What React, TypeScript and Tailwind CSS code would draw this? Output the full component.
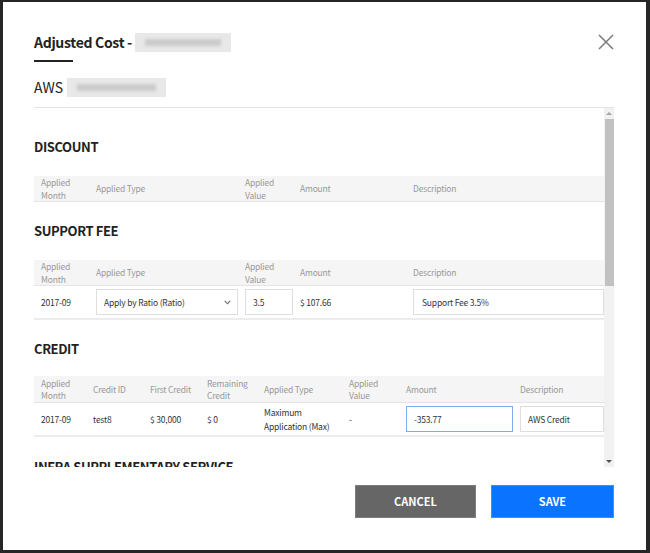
import React from "react";

const Blur = ({ w }: { w: number }) => (
  <span
    className="inline-flex items-center justify-center h-[19px] bg-[#e8e8e8] align-middle blur-[0.6px]"
    style={{ width: w }}
  >
    <span className="block h-[7px] bg-[#cbcbcb] blur-[1.8px]" style={{ width: w - 20 }} />
  </span>
);

const Th = ({ children }: { children: React.ReactNode }) => (
  <div className="pl-[7px] text-[8.5px] tracking-[-0.2px] leading-[12.5px] text-[#999] flex items-center">{children}</div>
);

const Td = ({ children, className = "" }: { children?: React.ReactNode; className?: string }) => (
  <div className={"pl-[7px] text-[8.5px] tracking-[-0.2px] leading-[12px] text-[#333] flex items-center " + className}>{children}</div>
);

const Box = ({ children, className = "" }: { children?: React.ReactNode; className?: string }) => (
  <div className={"h-[26px] w-full border bg-white flex items-center pl-[7px] text-[8.5px] tracking-[-0.2px] text-[#333] " + className}>
    {children}
  </div>
);

const Heading = ({ children, className = "" }: { children: React.ReactNode; className?: string }) => (
  <div className={"text-[13px] tracking-[-0.4px] leading-[18px] font-bold text-[#222] whitespace-nowrap " + className}>{children}</div>
);

export default function App() {
  return (
    <div className="w-[650px] h-[553px] bg-white border-[#262626] border-t-2 border-l-[3px] border-r-[4px] border-b-[3px] pl-[31px] pr-[32px] pt-[30px] flex flex-col font-['Noto_Sans_CJK_KR','Noto_Sans',sans-serif] overflow-hidden">
      {/* Title */}
      <div className="flex items-center justify-between h-[20px]">
        <div className="flex items-center text-[14px] tracking-[-0.3px] font-bold text-[#222] leading-[20px]">
          <span>Adjusted Cost -&nbsp;</span>
          <Blur w={96} />
        </div>
        <svg width="16" height="16" viewBox="0 0 16 16">
          <path d="M1 1 L15 15 M15 1 L1 15" stroke="#7a7a7a" strokeWidth="1.5" fill="none" />
        </svg>
      </div>
      <div className="mt-[8px] h-[2px] w-[39px] bg-[#222]" />
      <div className="mt-[15px] flex items-center text-[14px] leading-[20px] text-[#222]">
        <span className="mr-[4px]">AWS</span>
        <Blur w={99} />
      </div>

      {/* Scroll region */}
      <div className="mt-[10px] border-t border-[#e2e2e2] h-[360px] flex">
        <div className="w-[570px] overflow-hidden">
          <Heading className="mt-[30px]">DISCOUNT</Heading>
          <div className="mt-[20px] grid grid-cols-[55px_149px_55px_113px_198px] h-[26px] bg-[#f5f5f5] border-b border-[#e4e4e4]">
            <Th>Applied<br />Month</Th>
            <Th>Applied Type</Th>
            <Th>Applied<br />Value</Th>
            <Th>Amount</Th>
            <Th>Description</Th>
          </div>

          <Heading className="mt-[20px]">SUPPORT FEE</Heading>
          <div className="mt-[20px] grid grid-cols-[55px_149px_55px_113px_198px] h-[26px] bg-[#f5f5f5] border-b border-[#e4e4e4]">
            <Th>Applied<br />Month</Th>
            <Th>Applied Type</Th>
            <Th>Applied<br />Value</Th>
            <Th>Amount</Th>
            <Th>Description</Th>
          </div>
          <div className="grid grid-cols-[55px_149px_55px_113px_198px] h-[34px] border-b-2 border-[#ececec]">
            <Td>2017-09</Td>
            <Td>
              <Box className="border-[#dedede] justify-between pr-[6px]">
                <span>Apply by Ratio (Ratio)</span>
                <svg width="7" height="5" viewBox="0 0 7 5">
                  <path d="M0.8 0.8 L3.5 3.8 L6.2 0.8" stroke="#666" strokeWidth="1.1" fill="none" />
                </svg>
              </Box>
            </Td>
            <Td>
              <Box className="border-[#dedede]">3.5</Box>
            </Td>
            <Td>$ 107.66</Td>
            <Td>
              <Box className="border-[#dedede] pl-[8px]">Support Fee 3.5%</Box>
            </Td>
          </div>

          <Heading className="mt-[20px]">CREDIT</Heading>
          <div className="mt-[18px] grid grid-cols-[52px_57px_57px_57px_85px_57px_114px_91px] h-[27px] bg-[#f5f5f5] border-b border-[#e4e4e4]">
            <Th>Applied<br />Month</Th>
            <Th>Credit ID</Th>
            <Th>First Credit</Th>
            <Th>Remaining<br />Credit</Th>
            <Th>Applied Type</Th>
            <Th>Applied<br />Value</Th>
            <Th>Amount</Th>
            <Th>Description</Th>
          </div>
          <div className="grid grid-cols-[52px_57px_57px_57px_85px_57px_114px_91px] h-[34px] border-b-2 border-[#ececec]">
            <Td>2017-09</Td>
            <Td>test8</Td>
            <Td>$ 30,000</Td>
            <Td>$ 0</Td>
            <Td className="leading-[14px] whitespace-nowrap">Maximum<br />Application (Max)</Td>
            <Td>-</Td>
            <Td>
              <Box className="border-[#7eaeea]">-353.77</Box>
            </Td>
            <Td>
              <Box className="border-[#dedede]">AWS Credit</Box>
            </Td>
          </div>

          <Heading className="mt-[21px]">INFRA SUPPLEMENTARY SERVICE</Heading>
        </div>

        {/* Scrollbar */}
        <div className="w-[10px] h-full bg-[#f1f1f1] flex flex-col items-center">
          <div className="h-[11px] flex items-center justify-center">
            <div className="w-0 h-0 border-l-[3px] border-r-[3px] border-b-[3px] border-l-transparent border-r-transparent border-b-[#a3a3a3]" />
          </div>
          <div className="w-[9px] h-[167px] bg-[#c1c1c1]" />
          <div className="flex-1" />
          <div className="h-[11px] flex items-center justify-center">
            <div className="w-0 h-0 border-l-[3px] border-r-[3px] border-t-[3px] border-l-transparent border-r-transparent border-t-[#505050]" />
          </div>
        </div>
      </div>

      {/* Buttons */}
      <div className="mt-[18px] flex justify-end gap-[15px]">
        <button className="w-[121px] h-[33px] bg-[#666666] border border-[#7c7c7c] text-white text-[11px] font-bold">
          CANCEL
        </button>
        <button className="w-[123px] h-[33px] bg-[#0a73ff] border border-[#3d8fff] text-white text-[11px] font-bold">
          SAVE
        </button>
      </div>
    </div>
  );
}
